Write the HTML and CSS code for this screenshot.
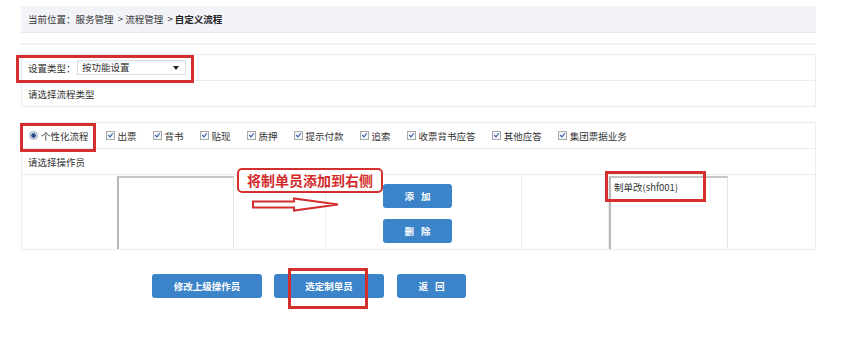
FILE: index.html
```html
<!DOCTYPE html>
<html lang="zh-CN">
<head>
<meta charset="utf-8">
<title>自定义流程</title>
<link rel="stylesheet" href="styles.css">
</head>
<body>
<div class="page">
  <div class="crumb">当前位置：服务管理&nbsp;&nbsp;&gt;&nbsp;流程管理&nbsp;&nbsp;&gt;&nbsp;<b>自定义流程</b></div>
  <div class="rule"></div>

  <div class="panel type-panel">
    <div class="row">
      <span class="label">设置类型：</span>
      <div class="select">按功能设置<span class="caret"></span></div>
    </div>
    <div class="row">请选择流程类型</div>
  </div>

  <div class="panel op-panel">
    <div class="row checks">
      <label class="item radio-item"><span class="radio"></span>个性化流程</label>
      <label class="item"><span class="cb"></span>出票</label>
      <label class="item"><span class="cb"></span>背书</label>
      <label class="item"><span class="cb"></span>贴现</label>
      <label class="item"><span class="cb"></span>质押</label>
      <label class="item"><span class="cb"></span>提示付款</label>
      <label class="item"><span class="cb"></span>追索</label>
      <label class="item"><span class="cb"></span>收票背书应答</label>
      <label class="item"><span class="cb"></span>其他应答</label>
      <label class="item"><span class="cb"></span>集团票据业务</label>
    </div>
    <div class="row">请选择操作员</div>
    <div class="pick">
      <div class="cell"></div>
      <div class="cell list"></div>
      <div class="cell"></div>
      <div class="cell actions">
        <button class="btn small spaced">添加</button>
        <button class="btn small spaced">删除</button>
      </div>
      <div class="cell"></div>
      <div class="cell list"><div class="opt">制单改(shf001)</div></div>
      <div class="cell"></div>
    </div>
  </div>

  <div class="footer">
    <button class="btn wide">修改上级操作员</button>
    <button class="btn wide">选定制单员</button>
    <button class="btn back spaced">返回</button>
  </div>

  <div class="mark mark-type"></div>
  <div class="mark mark-radio"></div>
  <div class="mark mark-opt"></div>
  <div class="mark mark-btn"></div>
  <div class="note">将制单员添加到右侧</div>
  <svg class="arrow" width="88" height="16" viewBox="0 0 88 16">
    <path d="M1 4.5 H42 V1.5 L86 7.5 L42 13.5 V10.5 H1 Z" fill="#fff" stroke="#d42f2f" stroke-width="2" stroke-linejoin="miter"/>
  </svg>
</div>
</body>
</html>
```

FILE: styles.css
```css
* { box-sizing: border-box; }
html, body { margin: 0; padding: 0; background: #fff; }
body {
  font-family: "Noto Sans CJK SC", "Noto Sans", "Liberation Sans", sans-serif;
  font-size: 9.5px;
  color: #333;
}
.page {
  position: relative;
  width: 860px;
  height: 342px;
  padding-left: 21px;
  padding-top: 6px;
}
.crumb {
  width: 795px;
  height: 27px;
  line-height: 27px;
  background: #f2f3f8;
  border-bottom: 1px solid #e8e9ee;
  padding-left: 7px;
  color: #333;
}
.crumb b { font-weight: bold; color: #222; }
.rule {
  width: 795px;
  height: 2px;
  margin-top: 10px;
  background: #eef0f3;
}
.panel {
  width: 795px;
  border: 1px solid #ececec;
  border-bottom: 0;
}
.type-panel { margin-top: 9px; }
.op-panel { margin-top: 15px; }
.row {
  height: 26px;
  display: flex;
  align-items: center;
  padding-left: 6px;
  border-bottom: 1px solid #ececec;
}
.label { width: 49px; }
.select {
  position: relative;
  width: 109px;
  height: 15px;
  line-height: 13px;
  border: 1px solid #dedede;
  padding-left: 4px;
  font-size: 9.5px;
}
.caret {
  position: absolute;
  right: 6px;
  top: 5px;
  width: 0;
  height: 0;
  border-left: 3px solid transparent;
  border-right: 3px solid transparent;
  border-top: 4px solid #222;
}
.checks { gap: 16px; padding-left: 7px; }
.item { display: flex; align-items: center; white-space: nowrap; }
.radio-item { margin-right: 1px; }
.radio {
  width: 9px; height: 9px;
  border-radius: 50%;
  border: 1px solid #9aa7b8;
  background: radial-gradient(circle, #2a4f86 0 2px, #dfe6ef 2.5px);
  margin-right: 3px;
}
.cb {
  position: relative;
  width: 9px; height: 9px;
  border: 1px solid #a9a9a9;
  background: #f3f5f8;
  margin-right: 3px;
}
.cb::after {
  content: "";
  position: absolute;
  left: 2px; top: 0px;
  width: 2px; height: 4px;
  border-right: 1px solid #2a5aa0;
  border-bottom: 1px solid #2a5aa0;
  transform: rotate(40deg);
}
.pick {
  display: grid;
  grid-template-columns: 95px 117px 92px 196px 87px 119px 87px;
  height: 75px;
  border-bottom: 1px solid #ececec;
}
.cell { height: 74px; }
.cell:nth-child(3), .cell:nth-child(4), .cell:nth-child(5) { border-right: 1px solid #eeeeee; }
.list {
  margin-top: 1px;
  height: 73px;
  border-left: 2px solid #b8b8b8;
  border-top: 2px solid #c6c6c6;
  border-right: 1px solid #e6e6e6;
}
.opt { padding: 2px 0 0 3px; font-size: 9.5px; color: #333; }
.actions {
  display: flex;
  flex-direction: column;
  gap: 11px;
  padding: 9px 0 0 57px;
}
.btn {
  font-family: inherit;
  border: 0;
  border-radius: 3px;
  background: #3b84c9;
  color: #fff;
  font-size: 9.5px;
  font-weight: bold;
  height: 24px;
  padding: 0;
  cursor: pointer;
}
.btn.spaced { letter-spacing: 7px; text-indent: 7px; }
.btn.small { width: 69px; }
.footer {
  display: flex;
  gap: 12px;
  margin-top: 24px;
  padding-left: 131px;
}
.btn.wide { width: 110px; }
.btn.back { width: 69px; margin-left: 1px; }
.mark {
  position: absolute;
  border: 3px solid #d42f2f;
}
.mark-type { left: 16px; top: 55px; width: 178px; height: 28px; }
.mark-radio { left: 20px; top: 123px; width: 76px; height: 29px; }
.mark-opt { left: 605px; top: 171px; width: 101px; height: 31px; }
.mark-btn { left: 288px; top: 268px; width: 80px; height: 41px; }
.note {
  position: absolute;
  left: 237px;
  top: 168px;
  width: 146px;
  height: 25px;
  border: 2px solid #d42f2f;
  border-radius: 5px;
  background: #fff;
  color: #d42a2a;
  font-size: 14px;
  font-weight: bold;
  line-height: 21px;
  text-align: center;
}
.arrow {
  position: absolute;
  left: 252px;
  top: 197px;
}
```
